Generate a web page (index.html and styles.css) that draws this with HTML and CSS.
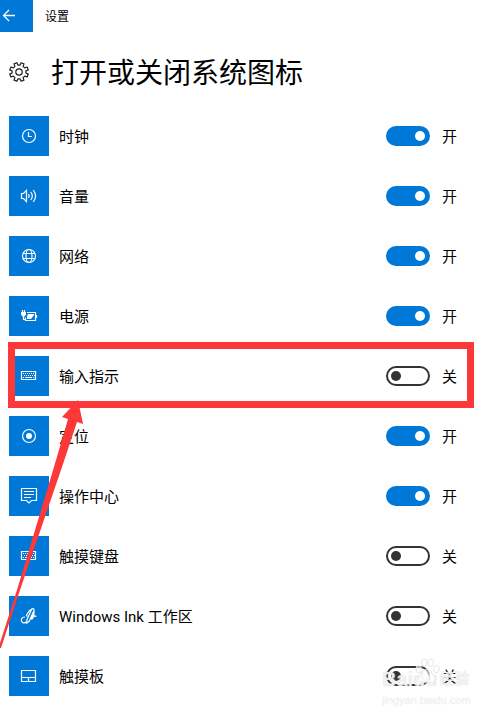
FILE: index.html
```html
<!DOCTYPE html>
<html lang="zh-CN">
<head>
    <meta charset="UTF-8">
    <meta name="viewport" content="width=device-width, initial-scale=1.0">
    <title>设置</title>
    <link rel="stylesheet" href="styles.css">
</head>
<body>

<div class="page">
    <!-- 顶部栏 -->
    <header class="top-bar">
        <button class="back-btn" type="button" aria-label="返回">
            <svg width="33" height="32" viewBox="0 0 33 32"><path d="M15 15.500H3.500M9 10L3.500 15.500L9 21"/></svg>
        </button>
        <span class="app-name">设置</span>
    </header>

    <div class="page-title">
        <svg class="gear" width="22" height="22" viewBox="-11 -11 22 22">
            <path d="M6.900 1.100L9.300 2.100L8.100 5L5.700 4.100L4.100 5.700L5 8.100L2.100 9.300L1.100 6.900L-1.100 6.900L-2.100 9.300L-5 8.100L-4.100 5.700L-5.700 4.100L-8.100 5L-9.300 2.100L-6.900 1.100L-6.900 -1.100L-9.300 -2.100L-8.100 -5L-5.700 -4.100L-4.100 -5.700L-5 -8.100L-2.100 -9.300L-1.100 -6.900L1.100 -6.900L2.100 -9.300L5 -8.100L4.100 -5.700L5.700 -4.100L8.100 -5L9.300 -2.100L6.900 -1.100Z"/>
            <circle r="3.200"/>
        </svg>
        <h1>打开或关闭系统图标</h1>
    </div>

    <!-- 系统图标列表 -->
    <ul class="icon-list">
        <li class="row">
            <svg class="tile" viewBox="0 0 40 40"><circle cx="20" cy="20" r="6.500"/><path d="M19.500 16V20.500H23"/></svg>
            <label for="clock">时钟</label>
            <input class="switch" type="checkbox" id="clock" checked>
            <span class="state">开</span>
        </li>
        <li class="row">
            <svg class="tile" viewBox="0 0 40 40"><path d="M12.500 17.500H14.500L17.500 14.500V25.500L14.500 22.500H12.500ZM19.500 18Q21 20 19.500 22M21.800 16Q24.800 20 21.800 24M24.200 14Q29 20 24.200 26"/></svg>
            <label for="volume">音量</label>
            <input class="switch" type="checkbox" id="volume" checked>
            <span class="state">开</span>
        </li>
        <li class="row">
            <svg class="tile" viewBox="0 0 40 40"><circle cx="20" cy="20" r="6.500"/><ellipse cx="20" cy="20" rx="3" ry="6.500"/><path d="M14 17.500H26M14 22.500H26"/></svg>
            <label for="network">网络</label>
            <input class="switch" type="checkbox" id="network" checked>
            <span class="state">开</span>
        </li>
        <li class="row">
            <svg class="tile" viewBox="0 0 40 40"><path d="M13.500 14V16M15.500 14V16M14.500 20V23.500H16M18 16.500H26.500V24.500H16.500V21.500M27.500 19V22"/><path class="solid" d="M12 16H17V18.500L15.500 20.500H13.500L12 18.500ZM19 18H25V19L22 23H18V20Z"/></svg>
            <label for="power">电源</label>
            <input class="switch" type="checkbox" id="power" checked>
            <span class="state">开</span>
        </li>
        <li class="row marked">
            <svg class="tile" viewBox="0 0 40 40"><path d="M12.500 15.500H26.500V23.500H12.500Z"/><path class="keys" d="M14 17.500H26M15 19.500H26"/><path d="M14 21.500H15M16 21.500H23M24 21.500H25"/></svg>
            <label for="input">输入指示</label>
            <input class="switch" type="checkbox" id="input">
            <span class="state">关</span>
        </li>
        <li class="row">
            <svg class="tile" viewBox="0 0 40 40"><circle cx="20" cy="20" r="6.500"/><circle class="solid" cx="20" cy="20" r="3"/></svg>
            <label for="location">定位</label>
            <input class="switch" type="checkbox" id="location" checked>
            <span class="state">开</span>
        </li>
        <li class="row">
            <svg class="tile" viewBox="0 0 40 40"><path d="M12.500 12.500H27.500V24.500H22.500L20 27L17.500 24.500H12.500ZM15 15.500H25M15 18.500H25M15 21.500H22"/></svg>
            <label for="action">操作中心</label>
            <input class="switch" type="checkbox" id="action" checked>
            <span class="state">开</span>
        </li>
        <li class="row">
            <svg class="tile" viewBox="0 0 40 40"><path d="M12.500 15.500H26.500V23.500H12.500Z"/><path class="keys" d="M14 17.500H26M15 19.500H26"/><path d="M14 21.500H15M16 21.500H23M24 21.500H25"/></svg>
            <label for="keyboard">触摸键盘</label>
            <input class="switch" type="checkbox" id="keyboard">
            <span class="state">关</span>
        </li>
        <li class="row">
            <svg class="tile" viewBox="0 0 40 40"><path d="M16 21C12.500 21 11.500 24 13 26C14 27.500 16 27 17 26M17.500 27L18 23.500L22.500 13.500C23 12 25.500 12.500 25 14.500L20 25.500ZM18 20.500L17.500 19L20.500 14.500L22.500 13.500M25 15V18L22.500 22C22 24 23.500 23 24 21.500C24.500 19.500 25.500 19 26 20.500L27.500 20"/></svg>
            <label for="ink">Windows Ink 工作区</label>
            <input class="switch" type="checkbox" id="ink">
            <span class="state">关</span>
        </li>
        <li class="row">
            <svg class="tile" viewBox="0 0 40 40"><path d="M12.500 14.500H26.500V25.500H12.500ZM12.500 21.500H26.500M19.500 21.500V25.500"/></svg>
            <label for="touchpad">触摸板</label>
            <input class="switch" type="checkbox" id="touchpad">
            <span class="state">关</span>
        </li>
    </ul>

    <!-- 红色箭头标注 -->
    <svg class="arrow" width="84" height="248" viewBox="0 0 84 248">
        <path d="M78 0L83 24L77 22L62 67L20 190L1 248H0V243L17 190L54 67L68 19L62 17Z"/>
    </svg>

    <!-- 水印 -->
    <div class="watermark">
        <svg class="paw" width="26" height="28" viewBox="0 0 28 28">
            <ellipse cx="5" cy="12" rx="3" ry="4"/>
            <ellipse cx="11" cy="5" rx="3" ry="4"/>
            <ellipse cx="18" cy="5" rx="3" ry="4"/>
            <ellipse cx="24" cy="12" rx="3" ry="4"/>
            <path d="M14 12C18 12 19 17 22 19C25 23 22 27 18 26H10C6 27 3 23 6 19C9 17 10 12 14 12Z"/>
        </svg>
        <div class="brand"><b>Baidu</b><span>经验</span></div>
        <div class="site">jingyan.baidu.com</div>
    </div>
</div>

</body>
</html>
```
FILE: styles.css
```css
:root {
    --blue: #0078d7;
    --red: #fc3838;
    --off: #333;
}

* {
    box-sizing: border-box;
}

body {
    margin: 0;
    background-color: #fff;
    color: #000;
    font-family: Roboto, "Noto Sans CJK SC", sans-serif;
    font-size: 15px;
}

.page {
    position: relative;
    min-height: 100vh;
    padding-bottom: 20px;
}

svg {
    display: block;
    flex-shrink: 0;
    fill: none;
}

/* --- 顶部栏 --- */
.top-bar {
    display: flex;
    align-items: center;
    gap: 12px;
    height: 32px;
}

.back-btn {
    width: 33px;
    height: 32px;
    padding: 0;
    border: none;
    background-color: var(--blue);
    cursor: pointer;
}

.back-btn svg {
    stroke: #fff;
    stroke-width: 1.3;
}

.app-name {
    padding-top: 2px;
    font-size: 12px;
    line-height: 16px;
}

/* --- 标题 --- */
.page-title {
    display: flex;
    align-items: center;
    gap: 21px;
    height: 80px;
    padding-left: 8px;
}

.gear {
    stroke: #222;
    stroke-width: 1.2;
    stroke-linejoin: round;
}

h1 {
    margin: 0;
    padding-top: 4px;
    font-size: 28px;
    font-weight: 400;
    line-height: 40px;
}

/* --- 图标列表 --- */
.icon-list {
    display: flex;
    flex-direction: column;
    gap: 20px;
    margin: 0;
    padding: 4px 42px 0 9px;
    list-style: none;
}

.row {
    position: relative;
    display: flex;
    align-items: center;
    height: 40px;
    line-height: 20px;
}

.tile {
    width: 40px;
    height: 40px;
    margin-right: 10px;
    background-color: var(--blue);
    stroke: #fff;
    stroke-width: 1.2;
}

.tile .solid {
    fill: #fff;
    stroke: none;
}

.tile .keys {
    stroke-dasharray: 1 1;
}

.row label {
    flex: 1;
    padding-top: 2px;
}

.state {
    padding-top: 2px;
}

.switch {
    appearance: none;
    display: flex;
    align-items: center;
    width: 44px;
    height: 20px;
    margin: 0 12px 0 0;
    padding: 0 3px;
    border: 2px solid var(--off);
    border-radius: 10px;
    cursor: pointer;
}

.switch::before {
    content: "";
    width: 10px;
    height: 10px;
    border-radius: 50%;
    background-color: var(--off);
}

.switch:checked {
    justify-content: flex-end;
    border-color: var(--blue);
    background-color: var(--blue);
}

.switch:checked::before {
    background-color: #fff;
}

/* --- 标注 --- */
.marked::after {
    content: "";
    position: absolute;
    inset: -14px -17px -12px -1px;
    border: 7px solid var(--red);
    pointer-events: none;
}

.arrow {
    position: absolute;
    top: 400px;
    left: 0;
    fill: var(--red);
    pointer-events: none;
}

/* --- 水印 --- */
.watermark {
    position: absolute;
    right: 27px;
    bottom: 10px;
    width: 90px;
    color: rgba(255, 255, 255, 0.5);
    text-shadow: 0 0 1px #ddd;
    white-space: nowrap;
    pointer-events: none;
}

.paw {
    position: absolute;
    top: -4px;
    left: 32px;
    fill: rgba(255, 255, 255, 0.6);
    stroke: #e4e4e4;
}

.brand {
    display: flex;
    align-items: center;
    gap: 2px;
    height: 32px;
    padding-top: 4px;
    font-family: "Liberation Sans", "Noto Sans CJK SC", sans-serif;
    font-size: 20px;
    line-height: 20px;
}

.brand span {
    font-size: 15px;
    font-weight: 700;
}

.site {
    font-family: "Liberation Sans", sans-serif;
    font-size: 11px;
    line-height: 14px;
}
```
